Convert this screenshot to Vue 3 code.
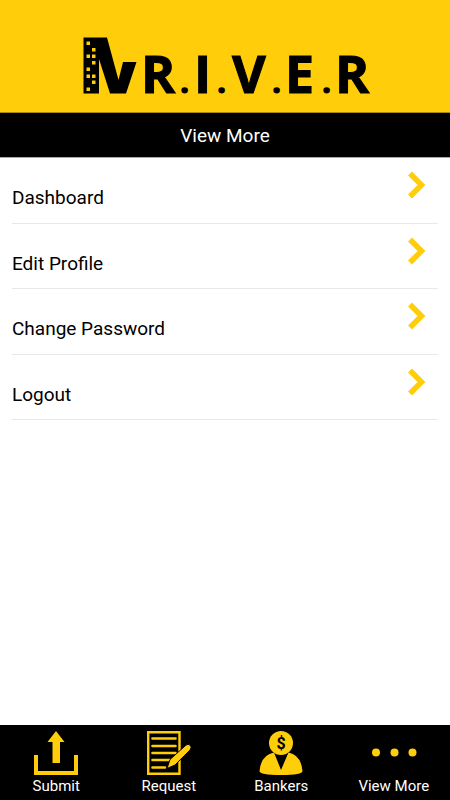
<script setup>
import { ref } from 'vue'

const menuItems = ref([
  { id: 'dashboard', label: 'Dashboard' },
  { id: 'profile', label: 'Edit Profile' },
  { id: 'password', label: 'Change Password' },
  { id: 'logout', label: 'Logout' }
])

const tabs = [
  { id: 'submit', label: 'Submit' },
  { id: 'request', label: 'Request' },
  { id: 'bankers', label: 'Bankers' },
  { id: 'more', label: 'View More' }
]

const activeTab = ref('more')
</script>

<template>
  <div class="screen">
    <header class="brand">
      <svg class="logo" width="290" height="78" viewBox="0 0 290 78" role="img" aria-label="R.I.V.E.R">
        <path d="M3.500 3.500H27L38.500 46L43 28H56.500L46 59.500H30L19 25V59.500H3.500Z" />
        <g class="windows">
          <rect x="6.500" y="7.500" width="3.500" height="3.500" />
          <rect x="12" y="14" width="3.500" height="3.500" />
          <rect x="6.500" y="20.500" width="3.500" height="3.500" />
          <rect x="12" y="20.500" width="3.500" height="3.500" />
          <rect x="12" y="27" width="3.500" height="3.500" />
          <rect x="6.500" y="33.500" width="3.500" height="3.500" />
          <rect x="6.500" y="40.500" width="3.500" height="3.500" />
          <rect x="12" y="40.500" width="3.500" height="3.500" />
          <rect x="12" y="46.500" width="3.500" height="3.500" />
          <rect x="6.500" y="53.500" width="3.500" height="3.500" />
        </g>
        <text class="letters" y="59">
          <tspan x="61">R</tspan><tspan class="dot" x="100">.</tspan><tspan x="114">I</tspan><tspan class="dot" x="137">.</tspan><tspan x="152">V</tspan><tspan class="dot" x="192">.</tspan><tspan x="205">E</tspan><tspan class="dot" x="242">.</tspan><tspan x="255">R</tspan>
        </text>
      </svg>
    </header>

    <h1 class="title">View More</h1>

    <main class="content">
      <ul class="menu">
        <li v-for="item in menuItems" :key="item.id" class="menu-row">
          <button type="button" class="menu-button">
            <span class="menu-label">{{ item.label }}</span>
            <svg class="chevron" width="18" height="28" viewBox="0 0 18 28" aria-hidden="true">
              <path d="M2 2.500L13.500 14L2 25.500" />
            </svg>
          </button>
        </li>
      </ul>
    </main>

    <nav class="tabs">
      <button
        v-for="tab in tabs"
        :key="tab.id"
        type="button"
        class="tab"
        :aria-current="activeTab === tab.id ? 'page' : undefined"
        @click="activeTab = tab.id"
      >
        <svg class="tab-icon" width="48" height="48" viewBox="0 0 48 48" aria-hidden="true">
          <g v-if="tab.id === 'submit'">
            <path d="M24 2L32.500 13H28V34H20.500V13H15.500Z" />
            <path d="M2 26H6V42H42V26H46V46H2Z" />
          </g>
          <g v-else-if="tab.id === 'request'">
            <path class="outline" d="M3.200 3.200H34.500V44.800H3.200Z" />
            <path class="lines" d="M7.500 9.500H30.500M7.500 17H30.500M7.500 24H30.500M7.500 31H25M7.500 38.500H20" />
            <path class="pen" d="M22 39.500L25 30.500L40.500 16.500Q43 14 45.500 16.500Q47 18.500 45 21L30 36Z" />
          </g>
          <g v-else-if="tab.id === 'bankers'">
            <circle cx="24" cy="14" r="12" />
            <path d="M17 23.500L24 41L31.500 23.500Q44 26 45.500 42Q45.500 46 24 46Q2.500 46 2.500 42Q4 26 17 23.500Z" />
            <text class="dollar" x="24" y="20" text-anchor="middle">$</text>
          </g>
          <g v-else>
            <circle cx="6" cy="23.500" r="4" />
            <circle cx="24.500" cy="23.500" r="4" />
            <circle cx="42.500" cy="23.500" r="4" />
          </g>
        </svg>
        <span class="tab-label">{{ tab.label }}</span>
      </button>
    </nav>
  </div>
</template>

<style>
body {
  background: #fff;
}
</style>

<style scoped>
.screen {
  display: flex;
  flex-direction: column;
  min-height: 100vh;
  font-family: Roboto, sans-serif;
  color: #000;
}
.brand {
  display: flex;
  justify-content: center;
  padding-top: 34px;
  background: #ffcd0a;
  border-bottom: 1px solid #a98a10;
}
.logo {
  display: block;
}
.windows {
  fill: #ffcd0a;
}
.letters {
  font-family: "Open Sans", sans-serif;
  font-size: 52px;
  font-weight: 700;
  stroke: #000;
  stroke-width: 1;
}
.dot {
  font-size: 32px;
}
.title {
  margin: 0;
  padding-top: 2px;
  background: #000;
  border-bottom: 1px solid #aaa;
  color: #fff;
  font-size: 19px;
  font-weight: 400;
  line-height: 42px;
  text-align: center;
}
.content {
  flex: 1;
  padding: 0 12px;
}
.menu {
  display: grid;
  grid-template-rows: repeat(4, 1fr);
  height: 262px;
  margin: 0;
  padding: 0;
  list-style: none;
}
.menu-row {
  display: flex;
  border-bottom: 1px solid #e8e8e8;
}
.menu-button {
  display: flex;
  flex: 1;
  justify-content: space-between;
  align-items: flex-start;
  padding: 13px 12px 0 0;
  background: none;
  border: 0;
  color: inherit;
  font: inherit;
  text-align: left;
  cursor: pointer;
}
.menu-label {
  padding-top: 15px;
  font-size: 19px;
  line-height: 24px;
}
.chevron {
  fill: none;
  stroke: #ffcd0a;
  stroke-width: 5.5;
}
.tabs {
  display: grid;
  grid-template-columns: repeat(4, 1fr);
  height: 75px;
  background: #000;
}
.tab {
  display: flex;
  flex-direction: column;
  align-items: center;
  padding: 4px 0 0;
  background: none;
  border: 0;
  color: #fff;
  font: inherit;
  cursor: pointer;
}
.tab-icon {
  fill: #ffcd0a;
}
.tab-label {
  font-size: 15px;
  line-height: 18px;
}
.outline {
  fill: none;
  stroke: #ffcd0a;
  stroke-width: 2.4;
}
.lines {
  fill: none;
  stroke: #ffcd0a;
  stroke-width: 2.6;
  stroke-linecap: round;
}
.pen {
  stroke: #000;
  stroke-width: 1;
}
.dollar {
  fill: #000;
  font-size: 16px;
  font-weight: 700;
}
</style>
